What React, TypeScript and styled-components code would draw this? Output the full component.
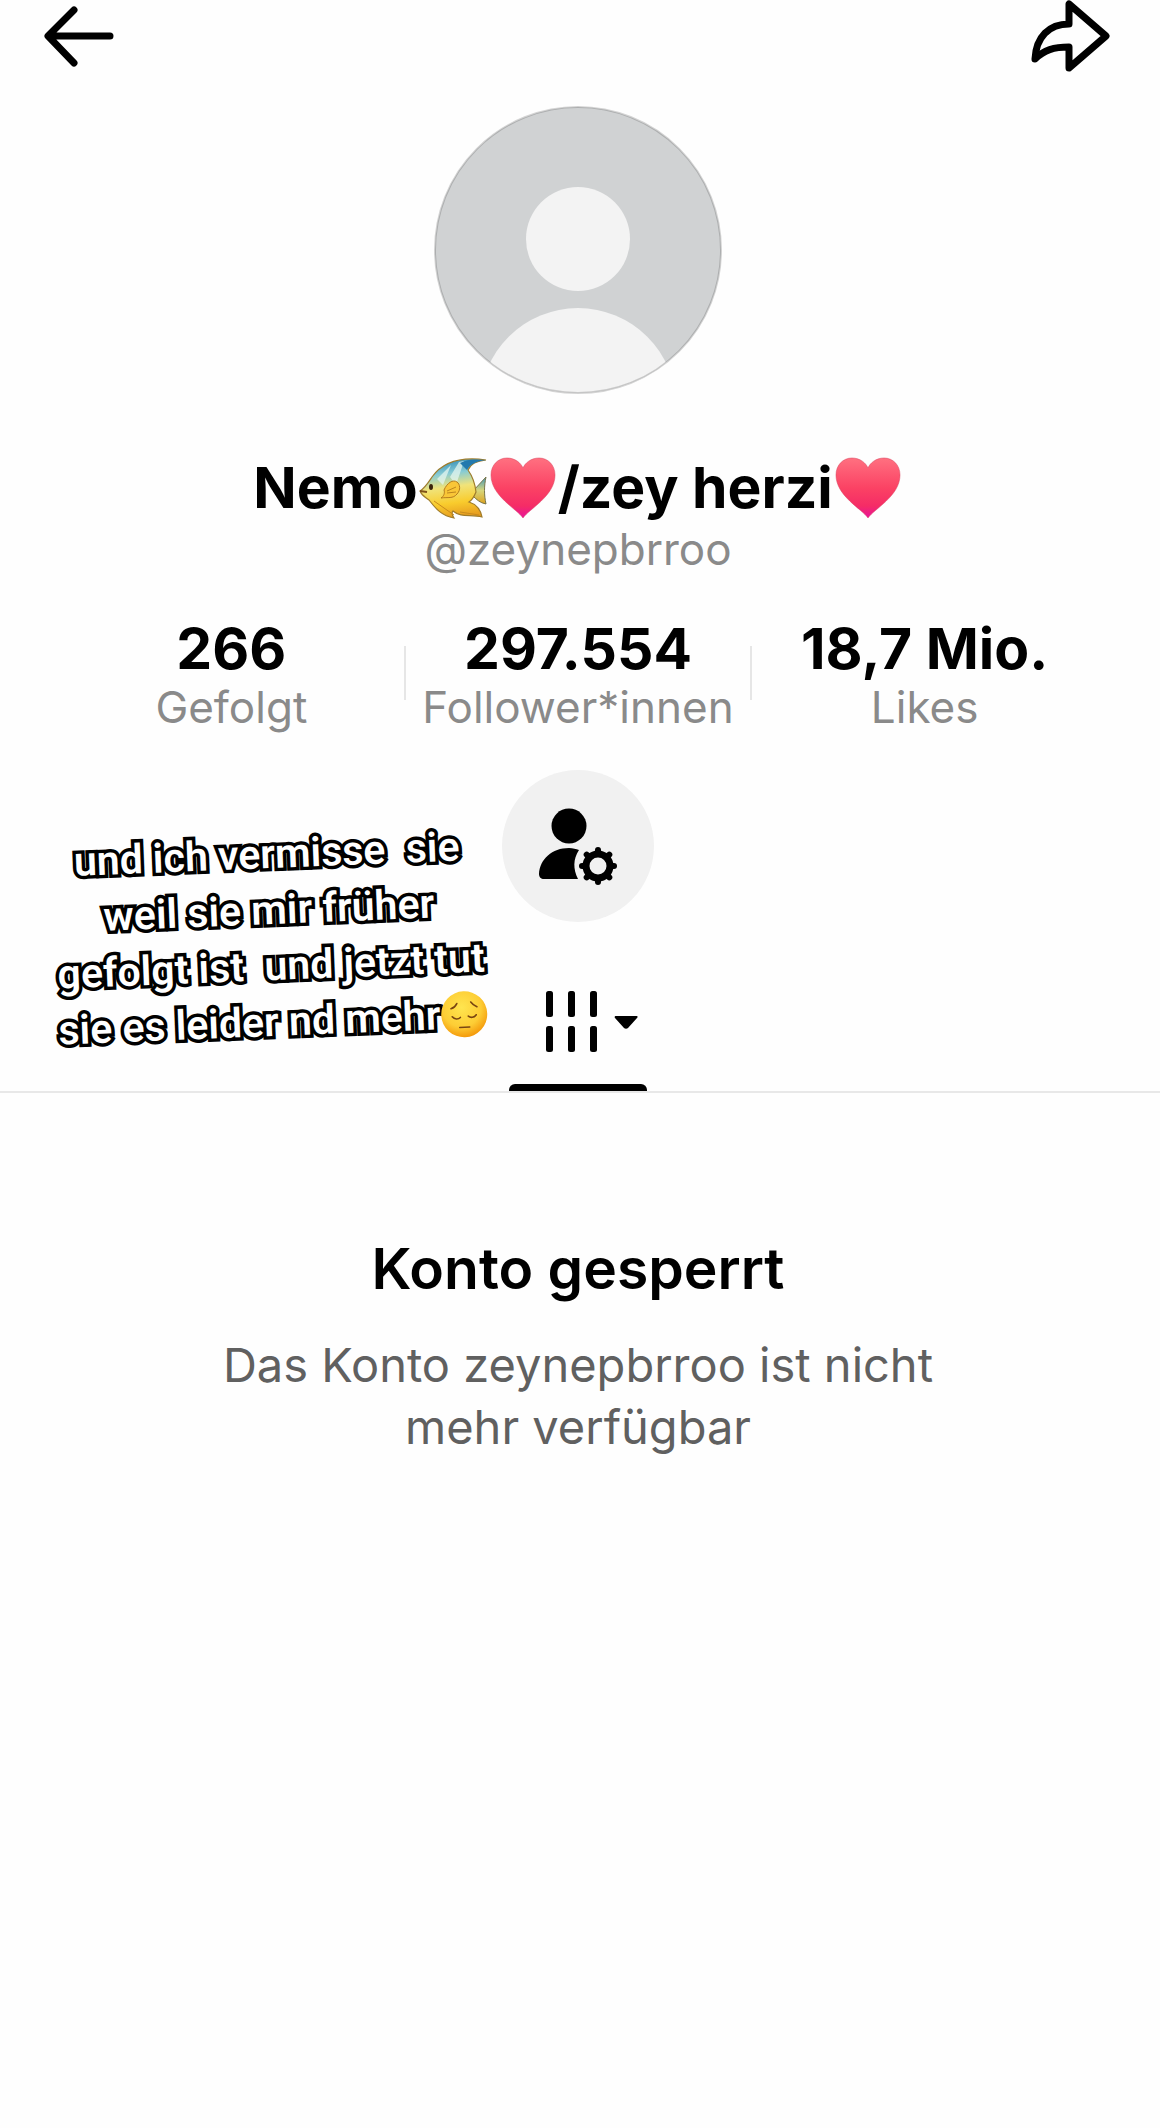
import React from "react";
import styled, { createGlobalStyle } from "styled-components";

const GlobalStyle = createGlobalStyle`
  *, *::before, *::after { box-sizing: border-box; }
  body { margin: 0; background: #fefefe; color: #000; font-family: Inter, "Noto Sans", sans-serif; }
  h1, h2, p, dl, dd { margin: 0; }
`;

const Page = styled.div`
  min-height: 100vh;
  background: #fefefe;
`;

const TopBar = styled.header`
  display: flex;
  align-items: center;
  justify-content: space-between;
  height: 72px;
  padding: 0 50px 0 42px;
`;

const IconButton = styled.button`
  display: flex;
  padding: 0;
  border: 0;
  background: none;
  color: #000;
  cursor: pointer;
`;

const Profile = styled.section`
  position: relative;
  display: flex;
  flex-direction: column;
  align-items: center;
  padding: 34px 62px 0 58px;
`;

const Name = styled.h1`
  display: flex;
  align-items: center;
  margin-top: 62px;
  font-size: 57px;
  line-height: 64px;
  font-weight: 700;
  white-space: nowrap;
`;

const Handle = styled.p`
  margin-top: 1px;
  color: #8a8a8a;
  font-size: 44px;
  line-height: 56px;
`;

const Stats = styled.dl`
  display: grid;
  grid-template-columns: repeat(3, 1fr);
  align-self: stretch;
  margin-top: 40px;
`;

const Stat = styled.div`
  display: flex;
  flex-direction: column-reverse;
  position: relative;
  text-align: center;
  white-space: nowrap;

  & + &::before {
    content: "";
    position: absolute;
    left: -1px;
    top: 29px;
    width: 2px;
    height: 54px;
    background: #e6e6e6;
  }
`;

const StatLabel = styled.dt`
  color: #8a8a8a;
  font-size: 44px;
  line-height: 53px;
`;

const StatValue = styled.dd`
  font-size: 57px;
  line-height: 64px;
  font-weight: 700;
`;

const RoundButton = styled(IconButton)`
  align-items: center;
  justify-content: center;
  width: 152px;
  height: 152px;
  margin-top: 36px;
  border-radius: 50%;
  background: #f1f1f1;
`;

const Caption = styled.p`
  position: absolute;
  left: 53px;
  top: 754px;
  width: 434px;
  transform: rotate(-2.3deg);
  color: #fff;
  font-family: Roboto, sans-serif;
  font-size: 41px;
  line-height: 56px;
  font-weight: 600;
  text-align: center;
  white-space: pre;
  -webkit-text-stroke: 7px #000;
  paint-order: stroke fill;
  stroke-linejoin: round;
`;

const CaptionLine = styled.span`
  display: flex;
  align-items: center;
  justify-content: center;
`;

const Tabs = styled.nav`
  display: flex;
  justify-content: center;
  padding: 61px 4px 0 0;
  border-bottom: 2px solid #e8e8e8;
`;

const Tab = styled.button`
  display: flex;
  flex-direction: column;
  align-items: center;
  gap: 31px;
  width: 138px;
  padding: 8px 0 0;
  border: 0;
  background: none;
  cursor: pointer;

  &::after {
    content: "";
    width: 100%;
    height: 7px;
    border-radius: 6px 6px 0 0;
    background: #000;
  }
`;

const Notice = styled.section`
  padding: 144px 62px 0 58px;
  text-align: center;
`;

const NoticeTitle = styled.h2`
  font-size: 57px;
  line-height: 64px;
  font-weight: 600;
`;

const NoticeText = styled.p`
  max-width: 760px;
  margin: 33px auto 0;
  color: #606060;
  font-size: 47px;
  line-height: 62px;
`;

const BackIcon = () => (
  <svg width="74" height="64" viewBox="0 0 74 64" fill="none" stroke="#000" strokeWidth="7" aria-hidden="true">
    <path d="M32 6 6 32l26 27M8 32h60" strokeLinecap="round" strokeLinejoin="round" />
  </svg>
);

const ShareIcon = () => (
  <svg width="80" height="72" viewBox="0 0 80 72" fill="none" stroke="#000" strokeWidth="7" strokeLinejoin="round" aria-hidden="true">
    <path d="M39 4v20C19 24 6 37 5 59c9-9 19-12 34-12v21l37-32z" />
  </svg>
);

const Avatar = () => (
  <svg width="288" height="288" viewBox="0 0 288 288" role="img" aria-label="Profilbild">
    <defs>
      <clipPath id="avatar-clip"><circle cx="144" cy="144" r="143" /></clipPath>
    </defs>
    <g clipPath="url(#avatar-clip)">
      <rect width="288" height="288" fill="#d0d2d3" />
      <circle cx="144" cy="133" r="52" fill="#f3f3f3" />
      <circle cx="144" cy="300" r="98" fill="#f3f3f3" />
    </g>
    <circle cx="144" cy="144" r="143" fill="none" stroke="#000" strokeOpacity=".17" strokeWidth="2" />
  </svg>
);

const Heart = ({ id }: { id: string }) => (
  <svg width="70" height="64" viewBox="0 0 70 64" role="img" aria-label="Herz">
    <defs>
      <linearGradient id={id} x1="0" y1="0" x2="0" y2="1">
        <stop offset="0" stopColor="#ff7080" />
        <stop offset=".5" stopColor="#fb4264" />
        <stop offset=".8" stopColor="#f52c66" />
        <stop offset="1" stopColor="#e8129b" />
      </linearGradient>
    </defs>
    <path d="M35 62C29 53 3 40 3 19 3 9 10 2 19 2c8 0 14 5 16 10C37 7 43 2 51 2c9 0 16 7 16 17 0 21-26 34-32 43z" fill={`url(#${id})`} stroke="#d9405c" strokeOpacity=".5" />
  </svg>
);

const Fish = () => (
  <svg width="70" height="64" viewBox="0 0 70 64" role="img" aria-label="Tropenfisch">
    <defs>
      <linearGradient id="fish-body" x1=".35" y1="0" x2=".5" y2="1">
        <stop offset="0" stopColor="#2d88b4" />
        <stop offset=".25" stopColor="#86cbd5" />
        <stop offset=".48" stopColor="#f0e37a" />
        <stop offset=".75" stopColor="#f9cc2d" />
        <stop offset="1" stopColor="#e69b1f" />
      </linearGradient>
      <linearGradient id="fish-tail" x1="0" y1="0" x2="0" y2="1">
        <stop offset="0" stopColor="#3c96bc" />
        <stop offset=".5" stopColor="#d7d67b" />
        <stop offset="1" stopColor="#dda11c" />
      </linearGradient>
    </defs>
    <path d="M55 35 68 21c-2 9-2 18 0 27-6-1-10-5-13-8z" fill="url(#fish-tail)" stroke="#777449" strokeWidth="1" />
    <path d="M2 35c5-3 8-8 12-14C24 7 40 0 68 4 58 5 52 9 50 14c5 7 7 13 8 22-2 5-4 8-7 10 7 2 12 8 13 15-11-3-21 1-29-6-2 2-1 4 1 7-12-2-18-9-25-18-4-3-7-4-9-9z" fill="url(#fish-body)" stroke="#9f7c2b" strokeWidth="1.2" />
    <path d="m19 23 14-14-8 20zM32 21l9-15 5-1-8 24z" fill="#e4f6ef" opacity=".75" />
    <path d="M42 7c7-4 16-4 26-3-9 1-16 4-19 10z" fill="#2279ae" />
    <path d="M26 34c3-7 9-11 13-8 3 2 4 8 0 12-4 5-9 3-16 4 3-2 4-5 3-8z" fill="#f9c637" stroke="#b57b1d" strokeWidth="1" />
    <path d="m29 35 9-4m-9 6 9-1" stroke="#bd861e" strokeWidth="1" />
    <path d="m16 45 20 14M42 56l19 3" stroke="#c88b1d" strokeWidth="1" />
    <ellipse cx="13" cy="31" rx="2" ry="3" fill="#3b250c" />
    <path d="m2 35 7 1" stroke="#7e5118" strokeWidth="2" />
  </svg>
);

const SadFace = () => (
  <svg width="48" height="48" viewBox="0 0 48 48" role="img" aria-label="Nachdenkliches Gesicht">
    <defs>
      <radialGradient id="face" cx=".45" cy=".35" r=".65">
        <stop offset="0" stopColor="#ffe54f" />
        <stop offset=".65" stopColor="#fdcd35" />
        <stop offset="1" stopColor="#f49a0b" />
      </radialGradient>
    </defs>
    <circle cx="24" cy="24" r="23" fill="url(#face)" />
    <g fill="none" stroke="#794511" strokeWidth="1.6" strokeLinecap="round">
      <path d="M11 18c3-1 5-3 6-5M31 12c2 3 4 4 6 5M12 26c2 3 6 3 8 1M28 26c2 2 6 2 8-1M19 37h10" />
    </g>
  </svg>
);

const TEETH = [0, 45, 90, 135, 180, 225, 270, 315];

const ManageIcon = () => (
  <svg width="80" height="78" viewBox="0 0 80 78" aria-hidden="true">
    <circle cx="31" cy="19" r="17.5" />
    <path d="M41 43c-6 9-6 19-1 29H6c-3 0-5-2-5-5 1-15 13-26 30-26 4 0 7 1 10 2z" />
    <circle cx="60" cy="59" r="12" fill="none" stroke="#000" strokeWidth="7" />
    {TEETH.map((angle) => (
      <path key={angle} d="M60 46v-3" stroke="#000" strokeWidth="6" strokeLinecap="round" transform={`rotate(${angle} 60 59)`} />
    ))}
  </svg>
);

const GridIcon = () => (
  <svg width="120" height="62" viewBox="0 0 120 62" aria-hidden="true">
    {[28, 50, 72].map((x) => (
      <g key={x}>
        <rect x={x} y="0" width="7" height="26" rx="2.5" />
        <rect x={x} y="35" width="7" height="26" rx="2.5" />
      </g>
    ))}
    <path d="M98 25h20c2 0 2 1 1 2l-9 10c-1 1-3 1-4 0l-9-10c-1-1 0-2 1-2z" />
  </svg>
);

const stats = [
  { value: "266", label: "Gefolgt" },
  { value: "297.554", label: "Follower*innen" },
  { value: "18,7 Mio.", label: "Likes" },
];

export default function App() {
  return (
    <Page>
      <GlobalStyle />
      <TopBar>
        <IconButton aria-label="Zurück"><BackIcon /></IconButton>
        <IconButton aria-label="Teilen"><ShareIcon /></IconButton>
      </TopBar>
      <main>
        <Profile>
          <Avatar />
          <Name>
            Nemo<Fish /><Heart id="heart-first" />/zey herzi<Heart id="heart-last" />
          </Name>
          <Handle>@zeynepbrroo</Handle>
          <Stats>
            {stats.map((stat) => (
              <Stat key={stat.label}>
                <StatLabel>{stat.label}</StatLabel>
                <StatValue>{stat.value}</StatValue>
              </Stat>
            ))}
          </Stats>
          <RoundButton aria-label="Konto verwalten"><ManageIcon /></RoundButton>
          <Caption>
            <CaptionLine>{"und ich vermisse  sie"}</CaptionLine>
            <CaptionLine>weil sie mir früher</CaptionLine>
            <CaptionLine>{"gefolgt ist  und jetzt tut"}</CaptionLine>
            <CaptionLine>sie es leider nd mehr<SadFace /></CaptionLine>
          </Caption>
        </Profile>
        <Tabs>
          <Tab aria-label="Beiträge"><GridIcon /></Tab>
        </Tabs>
        <Notice>
          <NoticeTitle>Konto gesperrt</NoticeTitle>
          <NoticeText>Das Konto zeynepbrroo ist nicht mehr verfügbar</NoticeText>
        </Notice>
      </main>
    </Page>
  );
}
